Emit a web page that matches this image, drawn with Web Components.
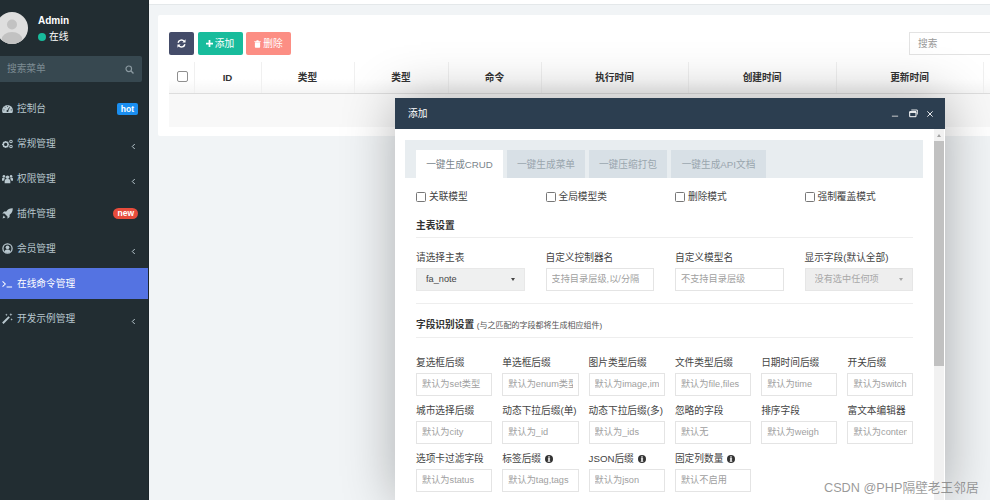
<!doctype html>
<html lang="zh"><head><meta charset="utf-8"><title>添加</title>
<style>
html,body{margin:0;height:500px;width:990px;overflow:hidden;background:#f1f4f6;font:9.7px/1.2 "Liberation Sans","Noto Sans CJK SC",sans-serif;color:#444}
</style></head><body>
<x-app>
  <x-sidebar slot="side">
    <x-menu-item label="控制台" icon="dashboard" badge="hot" badge-color="#1a8ef0" badge-shape="square"></x-menu-item>
    <x-menu-item label="常规管理" icon="cogs" arrow></x-menu-item>
    <x-menu-item label="权限管理" icon="group" arrow></x-menu-item>
    <x-menu-item label="插件管理" icon="rocket" badge="new" badge-color="#e74c3c"></x-menu-item>
    <x-menu-item label="会员管理" icon="user" arrow></x-menu-item>
    <x-menu-item label="在线命令管理" icon="terminal" active></x-menu-item>
    <x-menu-item label="开发示例管理" icon="magic" arrow></x-menu-item>
  </x-sidebar>
  <x-data-card slot="main"></x-data-card>
</x-app>
<x-modal title-text="添加">
  <x-tabs></x-tabs>
  <x-grid cols="4" style="padding-top:11px">
    <x-check>关联模型</x-check><x-check>全局模型类</x-check><x-check>删除模式</x-check><x-check>强制覆盖模式</x-check>
  </x-grid>
  <x-section style="margin-top:16px"><b>主表设置</b></x-section>
  <x-grid cols="4" style="margin-top:14px">
    <x-field label="请选择主表" value="fa_note" kind="select"></x-field>
    <x-field label="自定义控制器名" hint="支持目录层级,以/分隔"></x-field>
    <x-field label="自定义模型名" hint="不支持目录层级"></x-field>
    <x-field label="显示字段(默认全部)" hint="没有选中任何项" kind="disabled"></x-field>
  </x-grid>
  <x-section plain style="margin-top:12px"></x-section>
  <x-section style="margin-top:15px"><b>字段识别设置</b> <small>(与之匹配的字段都将生成相应组件)</small></x-section>
  <x-grid cols="6" style="margin-top:19px">
    <x-field label="复选框后缀" hint="默认为set类型"></x-field>
    <x-field label="单选框后缀" hint="默认为enum类型"></x-field>
    <x-field label="图片类型后缀" hint="默认为image,images"></x-field>
    <x-field label="文件类型后缀" hint="默认为file,files"></x-field>
    <x-field label="日期时间后缀" hint="默认为time"></x-field>
    <x-field label="开关后缀" hint="默认为switch"></x-field>
    <x-field label="城市选择后缀" hint="默认为city"></x-field>
    <x-field label="动态下拉后缀(单)" hint="默认为_id"></x-field>
    <x-field label="动态下拉后缀(多)" hint="默认为_ids"></x-field>
    <x-field label="忽略的字段" hint="默认无"></x-field>
    <x-field label="排序字段" hint="默认为weigh"></x-field>
    <x-field label="富文本编辑器" hint="默认为content"></x-field>
    <x-field label="选项卡过滤字段" hint="默认为status"></x-field>
    <x-field label="标签后缀" hint="默认为tag,tags" info></x-field>
    <x-field label="JSON后缀" hint="默认为json" info></x-field>
    <x-field label="固定列数量" hint="默认不启用" info></x-field>
  </x-grid>
</x-modal>
<x-watermark>CSDN @PHP隔壁老王邻居</x-watermark>
<script>
const ICONS={
dashboard:'<svg viewBox="0 0 12 10" width="11" height="10"><path fill="currentColor" d="M6 .6A5.900 5.900 0 0 0 .1 6.500c0 1.100.3 2 .8 2.900h10.200c.5-.9.8-1.800.8-2.900A5.900 5.900 0 0 0 6 .6z"/><path stroke="#222d32" stroke-width="1" fill="none" d="M6 7.200 8.200 3.200M3 2.600l.5.7M1.600 6h1M9.600 6h1M6 1.500v1"/><circle cx="6" cy="7.200" r="1.100" fill="#222d32"/></svg>',
cogs:'<svg viewBox="0 0 12 10" width="11" height="10"><circle cx="4" cy="5.500" r="2.600" fill="none" stroke="currentColor" stroke-width="1.600"/><path stroke="currentColor" stroke-width="1.100" d="M4 1.600v1.200M4 8.200v1.200M.1 5.500h1.200M6.700 5.500h1.200M1.200 2.800l.9.9M5.900 7.400l.9.9M1.200 8.200l.9-.9M5.900 3.600l.9-.9"/><circle cx="9.800" cy="2.200" r="1.400" fill="none" stroke="currentColor" stroke-width="1.100"/><circle cx="9.800" cy="7.800" r="1.400" fill="none" stroke="currentColor" stroke-width="1.100"/></svg>',
group:'<svg viewBox="0 0 12 10" width="11" height="10"><g fill="currentColor"><circle cx="6" cy="3" r="1.900"/><path d="M2.900 9.600V7.200c0-1.500 1-2.300 2-2.300h2.200c1 0 2 .8 2 2.300v2.400z"/><circle cx="2.100" cy="2.100" r="1.400"/><circle cx="9.900" cy="2.100" r="1.400"/><path d="M0 6.900V5c0-.8.6-1.400 1.400-1.400h1.300c-.1.5.1 1 .4 1.300-.7.4-1.100 1.100-1.200 2zM12 6.900V5c0-.8-.6-1.400-1.400-1.400H9.300c.1.5-.1 1-.4 1.300.7.4 1.100 1.100 1.200 2z"/></g></svg>',
rocket:'<svg viewBox="0 0 12 12" width="11" height="11"><path fill="currentColor" d="M11.700.3C8.800.1 6.400 1.300 4.600 3.700H2.300L.3 6h2.400l3.300 3.300v2.400l2.300-2V7.400C10.700 5.600 11.900 3.200 11.700.3zM1.700 8.300.6 11.400l3.100-1.100z"/></svg>',
user:'<svg viewBox="0 0 12 12" width="11" height="11"><circle cx="6" cy="6" r="5" fill="none" stroke="currentColor" stroke-width="1.400"/><circle cx="6" cy="4.700" r="2" fill="currentColor"/><path fill="currentColor" d="M2.700 9.300C3.200 7.900 4.500 7.200 6 7.200s2.800.7 3.300 2.100C8.500 10.300 7.300 10.800 6 10.800s-2.500-.5-3.300-1.500z"/></svg>',
terminal:'<svg viewBox="0 0 12 10" width="11" height="10"><path fill="none" stroke="currentColor" stroke-width="1.100" d="M.6 2.200 3.600 5 .6 7.800M5 8.300h6"/></svg>',
magic:'<svg viewBox="0 0 12 12" width="11" height="11"><path stroke="currentColor" stroke-width="2.200" d="M.9 11.100 7.800 4.200"/><path fill="currentColor" d="M9.700 0l.5 1.300 1.300.5-1.300.5-.5 1.300-.5-1.300-1.300-.5 1.300-.5zM4.800.6l.4 1 1 .4-1 .4-.4 1-.4-1-1-.4 1-.4zM10.500 5.600l.4 1 1 .4-1 .4-.4 1-.4-1-1-.4 1-.4z"/></svg>'
};
const INFO='<svg viewBox="0 0 10 10" width="8" height="8" style="vertical-align:-.5px;margin-left:1px"><circle cx="5" cy="5" r="5" fill="#333"/><rect x="4.100" y="1.600" width="1.800" height="1.700" fill="#fff"/><rect x="3.600" y="4.200" width="2.800" height="1.100" fill="#fff"/><rect x="4.100" y="4.200" width="1.800" height="3.400" fill="#fff"/><rect x="3.400" y="7.300" width="3.200" height="1.100" fill="#fff"/></svg>';
class Base extends HTMLElement{
  connectedCallback(){ if(!this.shadowRoot){ this.attachShadow({mode:'open'}).innerHTML='<style>'+this.constructor.css+'</style>'+this.render(); } }
  render(){ return '<slot></slot>'; }
}
const A=(el,n,d='')=>el.hasAttribute(n)?el.getAttribute(n):d;

customElements.define('x-app',class extends Base{
  static css=`:host{display:flex;height:500px;width:990px}
  .s{flex:none;width:149px}.m{flex:1;min-width:0;display:flex;flex-direction:column}
  .top{height:4px;background:#fff;border-bottom:1px solid #e4e8ea;flex:none}
  .c{padding:10px 0 0 9px}`;
  render(){return '<div class="s"><slot name="side"></slot></div><div class="m"><div class="top"></div><div class="c"><slot name="main"></slot></div></div>';}
});
customElements.define('x-sidebar',class extends Base{
  static css=`:host{display:flex;flex-direction:column;height:500px;background:#222d32;border-right:1px solid #1d262b;box-sizing:border-box;color:#b8c7ce;overflow:hidden}
  .user{height:56px;flex:none;display:flex;box-sizing:border-box;padding:12px 0 0 0}
  .av{margin-left:-4px;width:32px;height:32px;flex:none;border-radius:50%;overflow:hidden}
  .info{margin-left:10px;padding-top:2px}
  .n{color:#fff;font-weight:bold;font-size:10px;line-height:14px}
  .st{color:#fff;line-height:15px;display:flex;align-items:center;gap:3px;margin-top:1px}
  .dot{width:8px;height:8px;border-radius:50%;background:#18bc9c}
  .se{height:26px;flex:none;width:142px;background:#374850;display:flex;align-items:center;justify-content:space-between;box-sizing:border-box;padding:0 8px 0 7px;color:#7d8c93;border-radius:0 2px 2px 0}
  .se svg{color:#8b9aa1}
  .menu{padding-top:9px;display:flex;flex-direction:column}`;
  render(){return `<div class="user"><div class="av"><svg viewBox="0 0 32 32" width="32" height="32"><rect width="32" height="32" fill="#dedede"/><circle cx="16" cy="12.500" r="5" fill="#c2c2c2"/><ellipse cx="16" cy="28" rx="10.500" ry="8" fill="#c2c2c2"/></svg></div>
  <div class="info"><div class="n">Admin</div><div class="st"><span class="dot"></span><span>在线</span></div></div></div>
  <div class="se"><span>搜索菜单</span><svg viewBox="0 0 10 10" width="9" height="9"><circle cx="4.200" cy="4.200" r="3.100" fill="none" stroke="currentColor" stroke-width="1.300"/><path d="M6.500 6.500 9.400 9.400" stroke="currentColor" stroke-width="1.500"/></svg></div>
  <div class="menu"><slot></slot></div>`;}
});
customElements.define('x-menu-item',class extends Base{
  static css=`:host{display:flex;align-items:center;height:35px;box-sizing:border-box;padding:0 11px 0 2px;width:149px;color:#b8c7ce}
  :host([active]){color:#fff;background:linear-gradient(#222d32 1.500px,#5473e2 1.500px,#5473e2 33.500px,#222d32 33.500px)}
  .i{width:11px;height:11px;margin-right:4px;display:flex;align-items:center;flex:none}
  .l{flex:1}
  .b{color:#fff;font-weight:bold;font-size:8.500px;line-height:11px;padding:0 4px;border-radius:6px}
  .b.square{border-radius:2px;padding:0 4px;line-height:12px}
  .arrow{margin-right:2px;margin-top:5px}`;
  render(){
    const b=A(this,'badge');
    return `<span class="i">${ICONS[A(this,'icon')]||''}</span><span class="l">${A(this,'label')}</span>`+
    (b?`<span class="b ${A(this,'badge-shape')}" style="background:${A(this,'badge-color')}">${b}</span>`:'')+
    (this.hasAttribute('arrow')?'<svg class="arrow" viewBox="0 0 6 8" width="5" height="7"><path d="M4.500 1 1.500 4l3 3" fill="none" stroke="currentColor" stroke-width="1.200"/></svg>':'');
  }
});
customElements.define('x-btn',class extends Base{
  static css=`:host{display:inline-flex;align-items:center;justify-content:center;gap:2px;height:23px;box-sizing:border-box;border-radius:2px;color:#fff;background:var(--bg);font-size:9.700px}
  svg{flex:none}`;
  render(){
    const k=A(this,'icon');
    const ic={refresh:'<svg viewBox="0 0 10 10" width="9" height="9"><path fill="none" stroke="#fff" stroke-width="1.600" d="M1.200 4.200A3.900 3.900 0 0 1 8 2.600M8.800 5.800A3.900 3.900 0 0 1 2 7.400"/><path fill="#fff" d="M9.500 .3v3.500H6zM.5 9.700V6.200H4z"/></svg>',
    plus:'<svg viewBox="0 0 8 8" width="7" height="7"><path fill="#fff" d="M3 0h2v3h3v2H5v3H3V5H0V3h3z"/></svg>',
    trash:'<svg viewBox="0 0 8 9" width="7" height="8"><path fill="#fff" d="M.3 1.300h2.200L3 .3h2l.5 1h2.200v.9H.3zM1 2.600h6v5.400c0 .5-.3.8-.8.8H1.800c-.5 0-.8-.3-.8-.8z"/></svg>'}[k];
    return ic+'<slot></slot>';
  }
});
customElements.define('x-data-card',class extends Base{
  static css=`:host{display:block;background:#fff;height:121px;padding:17px 0 0 11px;box-sizing:border-box;overflow:hidden;border-radius:2px 0 0 2px}
  .bar{display:flex;gap:3.500px;height:23px;width:821px}
  x-btn.r{width:25px;--bg:#444c69}x-btn.a{width:45px;--bg:#18bc9c}x-btn.d{width:45px;--bg:#fc8e84}
  .sr{margin-left:auto;width:90px;flex:none;height:23px;border:1px solid #e3e3e3;box-sizing:border-box;padding:0 8px;line-height:21px;color:#999;margin-right:-9px}
  table{border-collapse:collapse;table-layout:fixed;width:821px;margin-top:7px}
  th{height:31px;padding:0;border:1px solid #f0f0f0;border-width:0 1px 1px 0;border-bottom:1px solid #ddd;background:linear-gradient(#fff 55%,#f5f5f5);font-weight:bold;color:#333;font-size:9.700px}
  td{height:33px;background:#f8f8f8;padding:0}
  .cb{display:block;width:9px;height:9px;border:1px solid #8f8f8f;border-radius:2px;background:#fff;margin:0 0 3px 8px}`;
  render(){
    const w=[25,67,93,94,93,147,148,147,7];
    const h=['<span class="cb"></span>','ID','类型','类型','命令','执行时间','创建时间','更新时间',''];
    return `<div class="bar"><x-btn class="r" icon="refresh"></x-btn><x-btn class="a" icon="plus">添加</x-btn><x-btn class="d" icon="trash">删除</x-btn><div class="sr">搜索</div></div>
    <table><colgroup>${w.map(x=>`<col style="width:${x}px">`).join('')}</colgroup><tr>${h.map(t=>`<th>${t}</th>`).join('')}</tr><tr><td colspan="9"></td></tr></table>`;
  }
});
customElements.define('x-modal',class extends Base{
  static css=`:host{position:absolute;left:395px;top:98px;width:550px;height:402px;background:#fff;box-shadow:1px 1px 50px rgba(0,0,0,.3);display:flex;flex-direction:column;overflow:hidden;z-index:2}
  .h{flex:none;height:31px;background:#2c3e50;color:#fff;display:flex;align-items:center;padding:0 11px 0 13px;font-size:9.700px}
  .t{flex:1}.w{display:flex;gap:8px;align-items:center}
  .min{margin-right:2px}
  .b{flex:1;display:flex;min-height:0}
  .c{flex:1;padding:11px 11px 0 10px;min-width:0;overflow:hidden}
  .sb{flex:none;width:10px;background:#f1f1f1;display:flex;flex-direction:column;margin-right:1px}
  .ar{height:12px;position:relative;flex:none}
  .ar:before{content:"";position:absolute;left:2.500px;top:5px;border:2.500px solid transparent;border-bottom:3px solid #a3a3a3;border-top:0}
  .th{height:225px;background:#c1c1c1;flex:none}`;
  render(){return `<div class="h"><span class="t">${A(this,'title-text')}</span><span class="w">
  <svg class="min" viewBox="0 0 9 9" width="8" height="9"><path d="M1 7.500h7" stroke="#ddd" stroke-width="1"/></svg>
  <svg viewBox="0 0 9 9" width="9" height="9"><path d="M.7 2.700h6.300v5H.7z" fill="none" stroke="#fff" stroke-width="1"/><path d="M.7 3.200h6.300" stroke="#fff" stroke-width="1.300"/><path d="M2.300 1h6v4.500" fill="none" stroke="#fff" stroke-width=".9"/></svg>
  <svg viewBox="0 0 9 9" width="8" height="8"><path d="M1.500 1.500l6 6M7.500 1.500l-6 6" stroke="#fff" stroke-width="1"/></svg></span></div>
  <div class="b"><div class="c"><slot></slot></div><div class="sb"><div class="ar"></div><div class="th"></div></div></div>`;}
});
customElements.define('x-tabs',class extends Base{
  static css=`:host{display:flex;gap:4px;height:38px;box-sizing:border-box;background:#e8edf0;padding:10px 0 0 11px;align-items:stretch}
  span{display:flex;align-items:center;justify-content:center;background:#d8e0e6;color:#9aa6ae;width:78px;padding-top:1px;box-sizing:border-box}
  .on{background:#fff;color:#7a858c;width:87px}.w{width:95px}`;
  render(){return '<span class="on">一键生成CRUD</span><span>一键生成菜单</span><span>一键压缩打包</span><span class="w">一键生成API文档</span>';}
});
customElements.define('x-grid',class extends Base{
  static css=`:host{display:grid;margin-left:11px;width:497px;box-sizing:border-box}
  :host([cols="4"]){grid-template-columns:repeat(4,1fr);column-gap:21px}
  :host([cols="6"]){grid-template-columns:repeat(5,76.300px) 1fr;column-gap:10px;row-gap:9px}`;
});
customElements.define('x-check',class extends Base{
  static css=`:host{display:flex;align-items:center;gap:3px;height:15px;color:#444}
  i{width:8px;height:8px;border:1px solid #777;border-radius:1.500px;background:#fff;flex:none}`;
  render(){return '<i></i><slot></slot>';}
});
customElements.define('x-section',class extends Base{
  static css=`:host{display:block;margin-left:11px;width:497px;border-bottom:1px solid #eee;color:#333;padding-bottom:5px;line-height:12px;font-size:9.700px}
  :host([plain]){padding:0}
  ::slotted(small){font-size:8px;color:#555}`;
});
customElements.define('x-field',class extends Base{
  static css=`:host{display:block;min-width:0}
  .l{height:11px;line-height:11px;white-space:nowrap;margin-bottom:5px;color:#444}
  .i{height:23px;box-sizing:border-box;border:1px solid #e4e4e4;background:#fff;padding:0 5px;line-height:21px;color:#a0a0a0;font-size:9.200px;overflow:hidden;white-space:nowrap;display:flex;justify-content:space-between;align-items:center}
  .i span{overflow:hidden;flex:1}
  .select{background:#eff0f0;border-color:#e8e8e8;color:#444;padding:0 9px}
  .disabled{background:#eee;border-color:#e6e6e6;color:#a8a8a8;padding:0 9px}
  .c{width:0;height:0;border:2.500px solid transparent;border-top:3px solid currentColor;border-bottom:0;flex:none;margin-left:4px}`;
  render(){
    const k=A(this,'kind');
    return `<div class="l">${A(this,'label')}${this.hasAttribute('info')?' '+INFO:''}</div><div class="i ${k}"><span>${A(this,'value')||A(this,'hint')}</span>${k?'<b class="c"></b>':''}</div>`;
  }
});
customElements.define('x-watermark',class extends Base{
  static css=`:host{position:absolute;left:824px;top:480px;color:rgba(120,120,120,.75);font-size:12.700px;line-height:16px;white-space:nowrap;z-index:3}`;
});
</script>
</body></html>
